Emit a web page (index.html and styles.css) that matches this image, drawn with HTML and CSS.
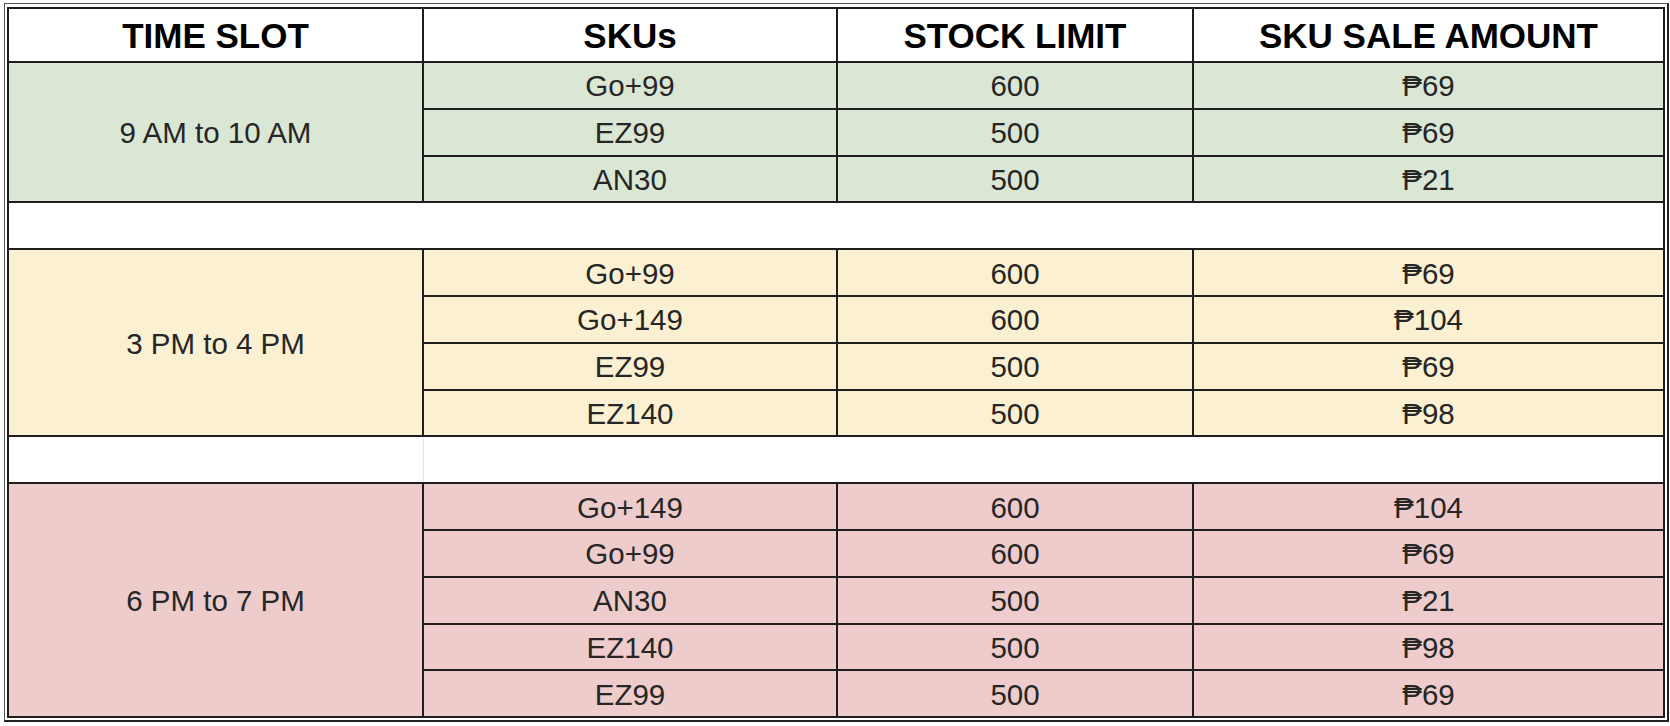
FILE: index.html
```html
<!DOCTYPE html>
<html>
<head>
<meta charset="utf-8">
<link rel="stylesheet" href="styles.css">
</head>
<body>
<div class="frame">
<table class="sched">
  <colgroup>
    <col class="c1"><col class="c2"><col class="c3"><col class="c4">
  </colgroup>
  <thead>
    <tr class="head">
      <th>TIME SLOT</th><th>SKUs</th><th>STOCK LIMIT</th><th>SKU SALE AMOUNT</th>
    </tr>
  </thead>
  <tbody class="g-green">
    <tr><td class="slot" rowspan="3">9 AM to 10 AM</td><td>Go+99</td><td>600</td><td>₱69</td></tr>
    <tr><td>EZ99</td><td>500</td><td>₱69</td></tr>
    <tr><td>AN30</td><td>500</td><td>₱21</td></tr>
  </tbody>
  <tbody>
    <tr class="spacer"><td colspan="4"></td></tr>
  </tbody>
  <tbody class="g-yellow">
    <tr><td class="slot" rowspan="4">3 PM to 4 PM</td><td>Go+99</td><td>600</td><td>₱69</td></tr>
    <tr><td>Go+149</td><td>600</td><td>₱104</td></tr>
    <tr><td>EZ99</td><td>500</td><td>₱69</td></tr>
    <tr><td>EZ140</td><td>500</td><td>₱98</td></tr>
  </tbody>
  <tbody>
    <tr class="spacer"><td class="sp-a"></td><td class="sp-b" colspan="3"></td></tr>
  </tbody>
  <tbody class="g-red">
    <tr><td class="slot" rowspan="5">6 PM to 7 PM</td><td>Go+149</td><td>600</td><td>₱104</td></tr>
    <tr><td>Go+99</td><td>600</td><td>₱69</td></tr>
    <tr><td>AN30</td><td>500</td><td>₱21</td></tr>
    <tr><td>EZ140</td><td>500</td><td>₱98</td></tr>
    <tr><td>EZ99</td><td>500</td><td>₱69</td></tr>
  </tbody>
</table>
</div>
</body>
</html>
```
FILE: styles.css
```css
html, body {
  margin: 0;
  padding: 0;
  background: #ffffff;
}

body {
  padding: 3px 0 0 4px;
  font-family: "Liberation Sans", Arial, "DejaVu Sans", sans-serif;
}

.frame {
  display: inline-block;
  border-top: 1px solid #555;
  border-left: 1px solid #555;
  border-right: 2px solid #222;
  border-bottom: 2px solid #222;
  padding: 3px 2px 2px 2px;
}

.sched {
  border-collapse: collapse;
  table-layout: fixed;
  width: 1656px;
  border: 2px solid #1e1e1e;
}

.c1 { width: 415px; }
.c2 { width: 414px; }
.c3 { width: 356px; }
.c4 { width: 471px; }

.sched th,
.sched td {
  border: 2px solid #1e1e1e;
  padding: 2px 0 0 0;
  text-align: center;
  vertical-align: middle;
  white-space: nowrap;
}

.head th {
  height: 50px;
  font-size: 35px;
  font-weight: bold;
  color: #000;
  background: #fff;
}

.sched tbody tr {
  height: 46.8px;
}

.sched td {
  font-size: 29.5px;
  color: #262626;
}

.g-green td { background: #dbe7d5; }
.g-yellow td { background: #fbf0d1; }
.g-red td { background: #edcccb; }

.sched .spacer td {
  background: #fff;
}

.sched .spacer .sp-a {
  border-right: 1px solid #e4e4e4;
}

.sched .spacer .sp-b {
  border-left: 1px solid #e4e4e4;
}
```
